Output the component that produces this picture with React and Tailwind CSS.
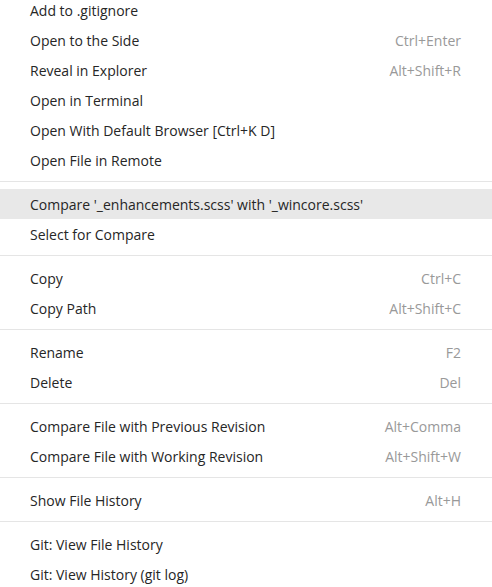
import React from "react";

const groups = [
  [
    ["Add to .gitignore", ""],
    ["Open to the Side", "Ctrl+Enter"],
    ["Reveal in Explorer", "Alt+Shift+R"],
    ["Open in Terminal", ""],
    ["Open With Default Browser [Ctrl+K D]", ""],
    ["Open File in Remote", ""],
  ],
  [
    ["Compare '_enhancements.scss' with '_wincore.scss'", "", true],
    ["Select for Compare", ""],
  ],
  [
    ["Copy", "Ctrl+C"],
    ["Copy Path", "Alt+Shift+C"],
  ],
  [
    ["Rename", "F2"],
    ["Delete", "Del"],
  ],
  [
    ["Compare File with Previous Revision", "Alt+Comma"],
    ["Compare File with Working Revision", "Alt+Shift+W"],
  ],
  [["Show File History", "Alt+H"]],
  [
    ["Git: View File History", ""],
    ["Git: View History (git log)", ""],
  ],
];

export default function App() {
  return (
    <div
      className="w-[492px] h-[587px] overflow-hidden bg-white text-[14px] text-[#262626]"
      style={{ fontFamily: '"Segoe UI", "Open Sans", "Noto Sans", sans-serif' }}
    >
      <div className="-mt-[5px] flex flex-col">
        {groups.map((g, gi) => (
          <React.Fragment key={gi}>
            {gi > 0 && (
              <div className="pt-[6px] pb-[7px]">
                <div className="h-px bg-[#e5e5e5]" />
              </div>
            )}
            {g.map(([label, key, active], i) => (
              <div
                key={i}
                className={`h-[30px] flex items-center justify-between pl-[30px] pr-[31px] ${
                  active ? "bg-[#e8e8e8]" : ""
                }`}
              >
                <span className="whitespace-nowrap">{label}</span>
                {key && <span className="text-[#999999] whitespace-nowrap">{key}</span>}
              </div>
            ))}
          </React.Fragment>
        ))}
      </div>
    </div>
  );
}
